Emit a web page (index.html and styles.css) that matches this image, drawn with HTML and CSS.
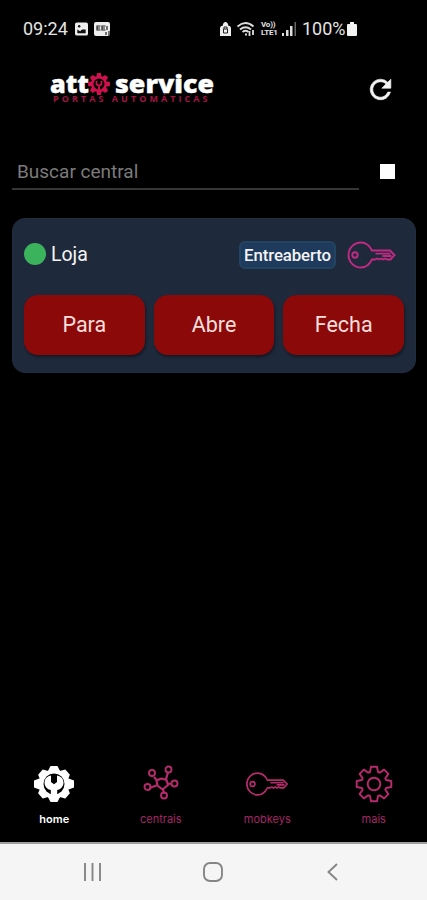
FILE: index.html
```html
<!DOCTYPE html>
<html lang="pt-BR">
<head>
<meta charset="utf-8">
<meta name="viewport" content="width=device-width, initial-scale=1">
<title>Atto Service</title>
<link rel="stylesheet" href="styles.css">
</head>
<body>
<svg class="defs" aria-hidden="true">
  <symbol id="gear" viewBox="-19 -19 38 38">
    <path d="M-4-12L-3-17.3H3L4-12 5.7-11.3 10.1-14.4 14.4-10.1 11.3-5.7 12-4 17.3-3V3L12 4 11.3 5.7 14.4 10.1 10.1 14.4 5.7 11.3 4 12 3 17.3H-3L-4 12-5.7 11.3-10.1 14.4-14.4 10.1-11.3 5.7-12 4-17.3 3V-3L-12-4-11.3-5.7-14.4-10.1-10.1-14.4-5.7-11.3Z"/>
  </symbol>
  <symbol id="key" viewBox="0 0 48 28">
    <path d="M24.500 9.500C22 4.500 18 1.500 13.500 1.500a12.300 12.300 0 0 0 0 25c5 0 8.500-3 11-8h3l2-1 2 1 2-1 2 1 2-1 2 1h3.500l4-4.500-4.500-4.500z"/>
    <path d="M28 12.600h15M35 15h9"/>
    <circle cx="7.500" cy="14" r="2.700"/>
  </symbol>
</svg>
<div class="phone">
  <div class="status">
    <span class="time">09:24</span>
    <svg class="s-image" viewBox="0 0 14 14"><rect width="14" height="14" rx="2" fill="#eee"/><path d="M2.500 11.500V7.500l3 2 2-2h4v4z" fill="#111"/><circle cx="4.500" cy="4" r="1.300" fill="#111"/></svg>
    <svg class="s-news" viewBox="0 0 17 14"><rect width="16" height="14" rx="2" fill="#eee"/><path d="M6.500 4H3v4h3.500M11.500 4H8v4h3.500M3 6h3M8 6h3M13 4v4M12 10v3M15 9v5" fill="none" stroke="#222" stroke-width="1.200"/></svg>
    <svg class="s-lock" viewBox="0 0 11 14"><path d="M1 4h1.500C3 1.500 4 0 5.500 0S8 1.500 8.500 4H10l1 2v8H0V6z" fill="#eee"/><path d="M3.500 11V7h4v4zM4 7V5h3v2" fill="none" stroke="#222"/></svg>
    <svg class="s-wifi" viewBox="0 0 18 14"><g fill="none" stroke="#ddd" stroke-width="1.800"><path d="M.5 4.500q8-7 16 0M3 7.500q5.500-4.500 11 0M5.500 10q3-2.500 6 0"/><path d="M8 12.500h2M12.500 9v5M16 8v5"/></g></svg>
    <span class="volte"><b>Vo))</b><b>LTE1</b></span>
    <svg class="s-signal" viewBox="0 0 14 14"><path d="M0 11h2v3H0zM4 8h2.500v6H4zM8 4h2.500v10H8z" fill="#ddd"/><path d="M12.500 0H14v14h-1.500z" fill="#666"/></svg>
    <span class="percent">100%</span>
    <svg class="s-battery" viewBox="0 0 10 14"><path d="M3 0h4v2h2q1 0 1 1v10q0 1-1 1H1q-1 0-1-1V3q0-1 1-1h2z" fill="#f2f2f2"/></svg>
  </div>

  <header class="header">
    <div class="brand">
      <svg class="logo" viewBox="0 0 168 26" role="img" aria-label="atto service">
        <g class="wordmark"><text x="1" y="20.500" textLength="39" lengthAdjust="spacingAndGlyphs">att</text><text x="66" y="20.500" textLength="99" lengthAdjust="spacingAndGlyphs">service</text></g>
        <use href="#gear" x="38" y="0" width="24" height="24" class="logo-gear"/>
        <circle cx="50" cy="12" r="5.500" fill="#000"/>
        <path d="M47.500 9v3l2.500 2 2.500-2V9M50 14v5" class="logo-wrench"/>
      </svg>
      <div class="tagline">PORTAS AUTOMÁTICAS</div>
    </div>
    <svg class="refresh" viewBox="0 0 24 24"><path d="M17.650 6.350A7.958 7.958 0 0 0 12 4a8 8 0 1 0 7.730 10h-2.080A6 6 0 1 1 12 6c1.660 0 3.140.69 4.220 1.780L13 11h7V4z"/></svg>
  </header>

  <div class="search">
    <div class="field">Buscar central</div>
    <div class="check"></div>
  </div>

  <main class="content">
    <section class="card">
      <div class="card-top">
        <span class="dot"></span>
        <span class="name">Loja</span>
        <span class="badge">Entreaberto</span>
        <svg class="card-key"><use href="#key"/></svg>
      </div>
      <div class="actions">
        <div class="btn">Para</div>
        <div class="btn">Abre</div>
        <div class="btn">Fecha</div>
      </div>
    </section>
  </main>

  <nav class="tabs">
    <div class="tab active">
      <svg class="ico" viewBox="0 0 42 38"><g transform="translate(21 19)"><g fill="#fff"><path id="tooth" d="M-6.500-12-3.500-18H3.500L6.500-12V12L3.500 18H-3.500L-6.500 12Z"/><path d="M-12-6.500-20-3.500V3.500L-12 6.500H12L20 3.500V-3.500L12-6.500Z"/><use href="#tooth" transform="rotate(49)"/><use href="#tooth" transform="rotate(-49)"/><circle r="14.500"/></g><circle r="10.500" fill="#000"/><path d="M-3-8.500A7.300 7.300 0 0 0-3.200 6V14h6.400V6A7.300 7.300 0 0 0 3-8.500V-2L0 .3-3-2z" fill="#fff"/></g></svg>
      <span>home</span>
    </div>
    <div class="tab">
      <svg class="ico line" viewBox="0 0 42 38"><path d="M16.500 15.500l5-2 5 1.500 1.500 5-5.500 4.500-5-4zM16.500 15l-2.500-3M26 14l2-6.500M28.500 18.500l3.500.5M23 24.500l1 4M16.500 20.500l-7 2.500" stroke-width="2.200"/><circle cx="12" cy="8" r="3"/><circle cx="28.500" cy="4.500" r="3"/><circle cx="34.500" cy="18.500" r="3"/><circle cx="24" cy="30.500" r="3"/><circle cx="7.500" cy="22" r="3"/></svg>
      <span>centrais</span>
    </div>
    <div class="tab">
      <svg class="ico line" viewBox="0 0 42 38"><use href="#key" x="0" y="6.500" width="42" height="25"/></svg>
      <span>mobkeys</span>
    </div>
    <div class="tab">
      <svg class="ico line" viewBox="0 0 42 38"><use href="#gear" x="2" y="0" width="38" height="38"/><circle cx="21" cy="19" r="6.300"/></svg>
      <span>mais</span>
    </div>
  </nav>

  <div class="sysnav">
    <svg viewBox="0 0 20 20"><path d="M2 1v18M9.500 1v18M17 1v18"/></svg>
    <svg viewBox="0 0 20 20"><rect x="1" y="1" width="18" height="18" rx="6"/></svg>
    <svg viewBox="0 0 20 20"><path d="M14 2 5.500 10 14 18"/></svg>
  </div>
</div>
</body>
</html>
```
FILE: styles.css
```css
* { box-sizing: border-box; }
body {
  margin: 0;
  background: #000;
  font-family: Roboto, "Liberation Sans", sans-serif;
  color: #f4f4f4;
}
svg { display: block; flex: none; }
.defs { position: absolute; width: 0; height: 0; }
.phone {
  width: 427px;
  height: 900px;
  display: flex;
  flex-direction: column;
  overflow: hidden;
}

.status {
  height: 57px;
  padding-left: 23px;
  display: flex;
  align-items: center;
  font-size: 18px;
  color: #e4e4e4;
  white-space: nowrap;
}
.time { width: 52px; }
.s-image { width: 13px; height: 14px; }
.s-news { width: 17px; height: 14px; margin-left: 6px; }
.s-lock { width: 11px; height: 14px; margin-left: 109px; }
.s-wifi { width: 18px; height: 14px; margin-left: 6px; }
.volte {
  width: 19px;
  margin-left: 6px;
  display: flex;
  flex-direction: column;
  font-size: 8px;
  letter-spacing: -.2px;
  line-height: 8px;
}
.s-signal { width: 14px; height: 14px; margin-left: 2px; }
.percent { width: 43px; margin-left: 6px; }
.s-battery { width: 10px; height: 14px; margin-left: 2px; }

.header {
  height: 90px;
  padding: 15px 31px 0 49px;
  display: flex;
  justify-content: space-between;
  align-items: flex-start;
}
.brand { width: 168px; }
.logo { width: 168px; height: 26px; overflow: visible; }
.wordmark {
  font-family: "Open Sans", sans-serif;
  font-size: 24px;
  font-weight: 800;
  fill: #fff;
  stroke: #fff;
  stroke-width: .4;
}
.tagline {
  margin: -5px 0 0 4px;
  font-family: "Open Sans", sans-serif;
  font-size: 9px;
  font-weight: 700;
  line-height: 12px;
  letter-spacing: 3.050px;
  white-space: nowrap;
  color: #a01542;
}
.logo-gear { fill: #d0114e; }
.logo-wrench { fill: none; stroke: #d0114e; stroke-width: 1.800; }
.refresh {
  width: 31px;
  height: 31px;
  margin-top: 2px;
  fill: #f4f4f4;
  stroke: #f4f4f4;
  stroke-width: .5;
}

.search {
  height: 71px;
  padding: 6px 32px 0 12px;
  display: flex;
  justify-content: space-between;
}
.field {
  width: 347px;
  height: 37px;
  padding-left: 5px;
  border-bottom: 2px solid #363636;
  color: #7b7b7b;
  font-size: 19px;
  line-height: 37px;
}
.check { width: 15px; height: 15px; margin-top: 11px; background: #fff; }

.content { flex: 1; padding: 0 11px 0 12px; }
.card {
  height: 155px;
  padding: 12px;
  border: 1px solid #212d3f;
  border-radius: 13px;
  background: #1e293b;
}
.card-top { height: 48px; display: flex; align-items: center; margin: -1px -1px 17px; }
.dot { width: 22px; height: 22px; border-radius: 50%; background: #3bb35d; }
.name { margin-left: 5px; font-size: 19.500px; }
.badge {
  width: 97px;
  height: 28px;
  margin: 2px 0 0 auto;
  border: 2px solid #234461;
  border-radius: 6px;
  background: #1e3a5c;
  font-size: 16.800px;
  font-weight: 500;
  letter-spacing: -.1px;
  line-height: 25px;
  text-align: center;
}
.card-key {
  width: 49px;
  height: 28px;
  margin: 1px 8px 0 11px;
  fill: none;
  stroke: #c02a83;
  stroke-width: 1.900;
}
.actions { display: flex; gap: 9px; margin: 0 -1px; }
.btn {
  flex: 1;
  height: 60px;
  border-radius: 14px;
  background: #8b0909;
  color: #f8dfdc;
  font-size: 21.500px;
  line-height: 59px;
  text-align: center;
  box-shadow: 1px 2px 3px rgba(0, 0, 0, .4);
}

.tabs { height: 77px; padding-left: 1px; display: grid; grid-template-columns: repeat(4, 1fr); }
.tab {
  display: flex;
  flex-direction: column;
  align-items: center;
  font-family: Inter, sans-serif;
  font-size: 11px;
  line-height: 14px;
  color: #a52765;
}
.tab.active { color: #fff; font-weight: 600; }
.ico { width: 42px; height: 38px; margin-bottom: 9px; }
.line { fill: none; stroke: #b62b6b; stroke-width: 1.900; stroke-linejoin: round; }

.sysnav {
  height: 58px;
  padding: 0 84px 0 83px;
  border-top: 2px solid #a0a0a0;
  background: #f5f5f5;
  display: flex;
  justify-content: space-between;
  align-items: center;
}
.sysnav svg { width: 20px; height: 20px; fill: none; stroke: #858585; stroke-width: 1.900; }
```
